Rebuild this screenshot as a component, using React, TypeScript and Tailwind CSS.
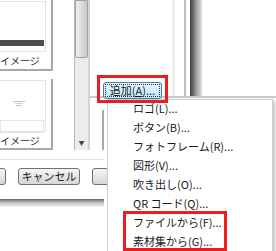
const menuItems = [
	'ロゴ(L)...',
	'ボタン(B)...',
	'フォトフレーム(R)...',
	'図形(V)...',
	'吹き出し(O)...',
	'QR コード(Q)...',
	'ファイルから(F)...',
	'素材集から(G)...',
];

const Thumb = ({ dark }: { dark?: boolean }) => {
	return (
		<div className="w-[53px] h-[71px] border-r-2 border-b-2 border-[#a8a8a8] bg-white flex flex-col">
			<div className="h-[52px] w-[46px] border-r border-b border-[#e2e2e2] mt-[1px] border-t flex flex-col">
				{dark ? (
					<div className="mt-[38px] h-[6px] w-[44px] bg-[#4d4d4d]" />
				) : (
					<div className="flex flex-col">
						<div className="h-[20px]" />
						<svg width="12" height="6" viewBox="0 0 12 6" className="ml-[13px]">
							<rect x="0" y="0" width="12" height="1" fill="#c4c4c4" />
							<rect x="2" y="2" width="8" height="1" fill="#d2d2d2" />
							<rect x="3" y="4" width="6" height="1" fill="#c4c4c4" />
						</svg>
						<div className="mt-[13px] h-[13px] w-[44px] border border-[#e6e6e6]" />
					</div>
				)}
			</div>
			<div className="h-[17px] leading-[17px] text-[10px] text-[#333] whitespace-nowrap">イメージ</div>
		</div>
	);
};

const WinButton = ({ label, className }: { label: string; className: string }) => {
	return (
		<div
			className={`h-[17px] rounded-[3px] border border-[#707070] bg-gradient-to-b from-[#f6f6f6] via-[#e6e6e6] to-[#d6d6d6] flex items-center justify-center text-[11px] leading-none ${className}`}
		>
			{label}
		</div>
	);
};

const App = () => {
	return (
		<div className="relative w-[276px] h-[251px] overflow-hidden bg-white text-[#1a1a1a] font-['Noto_Sans_CJK_JP','Noto_Sans',sans-serif]">
			{/* upper part of dialog */}
			<div className="flex h-[150px]">
				<div className="w-[75px] border-r border-[#b8b8b8] flex flex-col gap-[8px]">
					<Thumb dark />
					<Thumb />
				</div>
				<div className="w-[15px] bg-[#ececec] border-r-2 border-[#d4d4d4] flex flex-col">
					<div className="h-[58px] w-[13px] rounded-b-[2px] border border-[#a0a0a0] bg-gradient-to-r from-[#f0f0f0] via-[#dcdcdc] to-[#c8c8c8]" />
					<div className="flex-1" />
					<div className="h-[10px] text-[6px] leading-[10px] text-center text-[#444] mb-[2px]">▼</div>
				</div>
				<div className="flex-1 flex flex-col">
					<div className="flex h-[98px] border-b-2 border-[#c8c8c8]">
						<div className="w-[82px] pt-[82px] pl-[13px]">
							<div className="w-[59px] h-[17px] rounded-[3px] border border-[#3c7fb1] bg-gradient-to-b from-[#eaf6fd] to-[#bee6fd] p-[1px]">
								<div className="h-full border border-dotted border-[#333] flex items-center justify-center text-[11px] leading-none">
									追加(<span className="underline">A</span>)...
								</div>
							</div>
						</div>
						<div className="w-[3px] bg-[#eef0f0]" />
						<div className="w-[9px]" />
						<div className="w-[2px] bg-[#bdbdbd]" />
						<div className="w-[4px]" />
						<div className="w-[12px] bg-gradient-to-r from-[#3c3c3c] via-[#9a9a9a] to-[#e4e4e4]" />
						<div className="flex-1" />
					</div>
					<div className="flex-1 flex">
						<div className="w-[12px]" />
						<div className="w-[2px] mt-[12px] bg-[#a8a8a8]" />
					</div>
				</div>
			</div>
			{/* lower part of dialog */}
			<div className="w-[104px] h-[10px] border-b border-[#dbe4ec]" />
			<div className="flex w-[110px] pt-[8px] gap-[12px]">
				<WinButton label="" className="w-[20px] -ml-[12px]" />
				<WinButton label="キャンセル" className="w-[72px]" />
				<WinButton label="" className="w-[20px]" />
			</div>
			<div className="w-[104px] h-[14px]" />
			<div className="w-[104px] h-[8px] bg-gradient-to-b from-[#6a6a6a] via-[#c8c8c8] to-[#f4f4f4]" />

			{/* context menu */}
			<div className="absolute left-[107px] top-[99px] w-[166px] h-[170px] bg-white border border-[#cfcfcf] shadow-[2px_2px_3px_rgba(0,0,0,0.25)]">
				{menuItems.map((item) => (
					<div key={item} className="h-[19px] leading-[17px] pl-[25px] text-[11px] whitespace-nowrap">
						{item}
					</div>
				))}
			</div>

			{/* annotation boxes */}
			<div className="absolute left-[97px] top-[75px] w-[71px] h-[28px] border-[3px] border-[#ee1c1c]" />
			<div className="absolute left-[123px] top-[211px] w-[104px] h-[40px] border-[3px] border-[#ee1c1c]" />
		</div>
	);
};

export default App;
